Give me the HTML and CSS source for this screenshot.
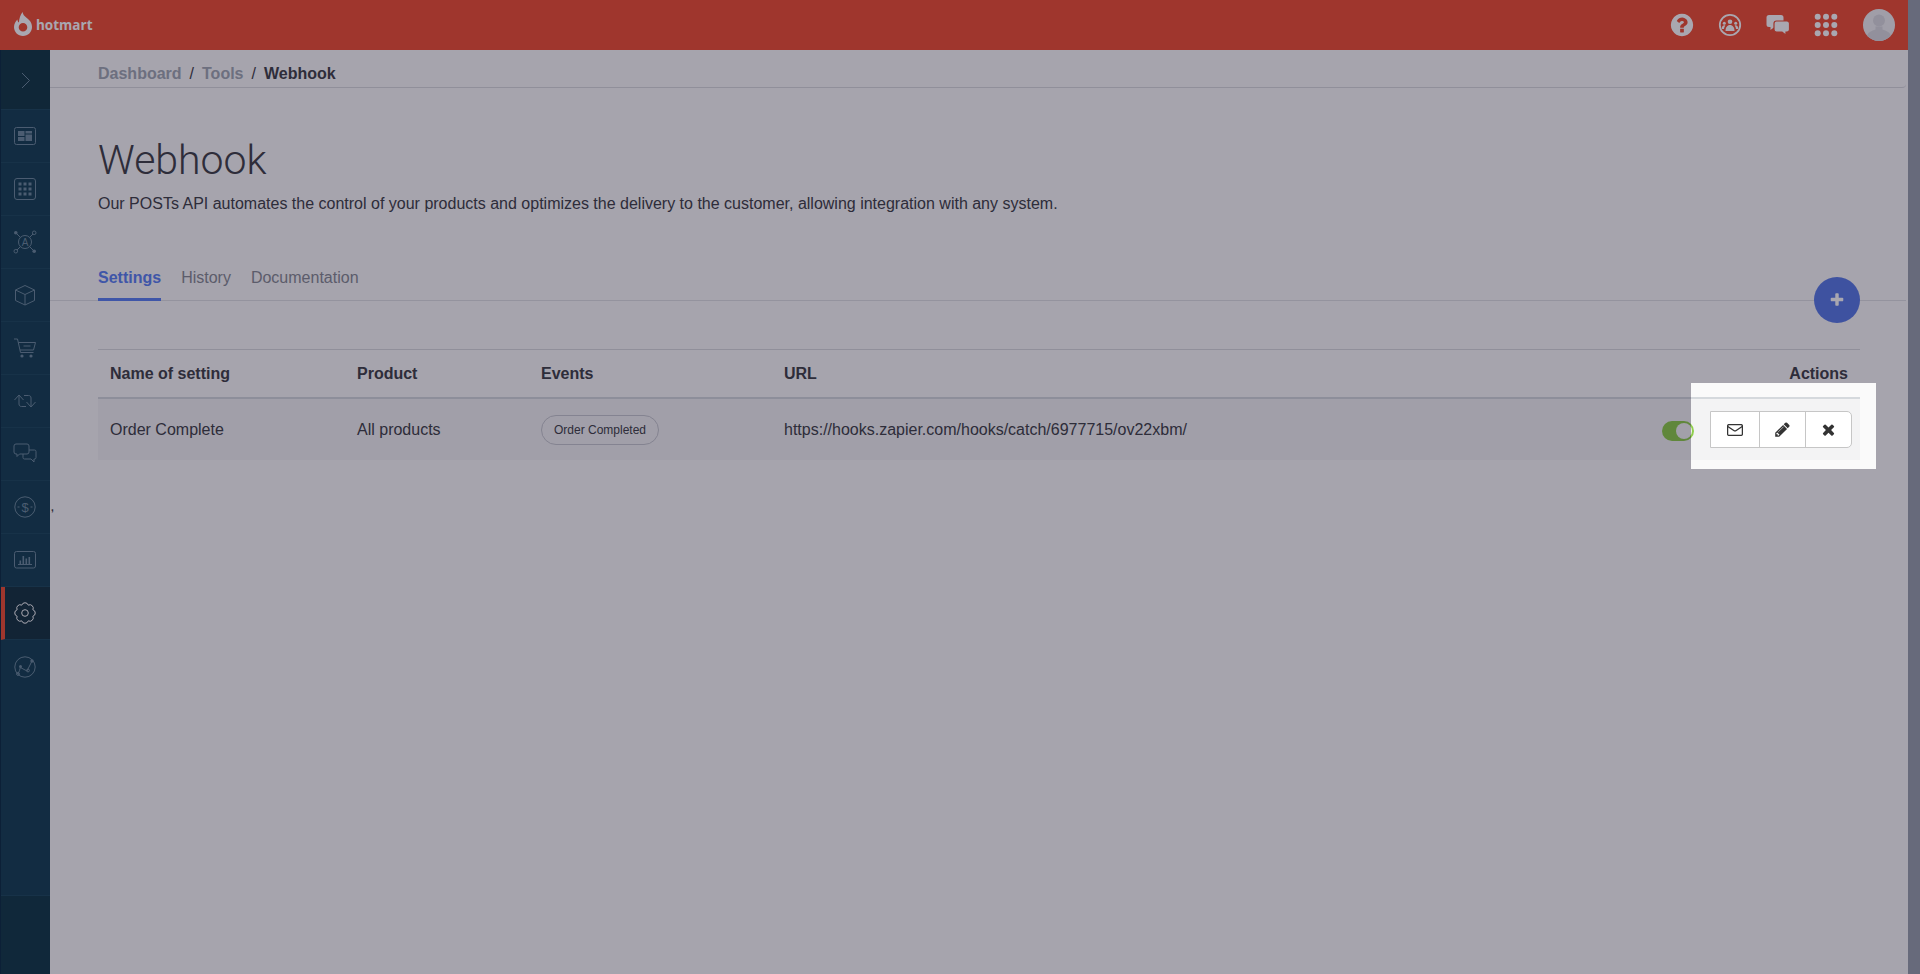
FILE: index.html
```html
<!DOCTYPE html>
<html>
  <head>
    <title>Webhook</title>
    <meta name="viewport" content="width=device-width, initial-scale=1">
    <link rel="stylesheet" href="styles.css">
  </head>
  <body>
    <header class="topbar">
      <div class="logo">
        <svg class="logo-mark" viewBox="0 0 18 24"><path fill-rule="evenodd" d="M8.6 0c.4 2.6 1.7 3.9 3.6 5.6C15.600 8.100 18 10.800 18 15c0 5-4 9-9 9s-9-4-9-9c0-3.400 1.700-6 3.400-7.600.1 1.500.6 2.400 1.500 3C5.300 6.500 6.300 3 8.600 0zM9 11a4.300 4.300 0 1 0 0 8.600A4.300 4.300 0 0 0 9 11z"/></svg>
        <span class="logo-text">hotmart</span>
      </div>
      <nav class="topbar-icons">
        <svg class="top-icon help" viewBox="0 0 1792 1792"><path d="M1024 1376v-192q0-14-9-23t-23-9h-192q-14 0-23 9t-9 23v192q0 14 9 23t23 9h192q14 0 23-9t9-23zm256-672q0-88-55.500-163t-138.500-116-170-41q-243 0-371 213-15 24 8 42l132 100q7 6 19 6 16 0 25-12 53-68 86-92 34-24 86-24 48 0 85.500 26t37.500 59q0 38-20 61t-68 45q-63 28-115.500 86.500t-52.500 125.500v36q0 14 9 23t23 9h192q14 0 23-9t9-23q0-19 21.500-49.500t54.500-49.500q32-18 49-28.500t46-35 44.500-48 28-60.500 12.500-81zm384 192q0 209-103 385.500t-279.500 279.500-385.500 103-385.500-103-279.500-279.500-103-385.500 103-385.500 279.500-279.500 385.500-103 385.500 103 279.500 279.500 103 385.500z"/></svg>
        <svg class="top-icon" viewBox="0 0 24 24">
          <circle class="ring" cx="12" cy="12" r="10.200"/>
          <circle cx="12" cy="8.800" r="2.300"/>
          <path d="M7.500 18c0-3.400 1.800-5.900 4.500-5.900s4.500 2.500 4.500 5.900z"/>
          <circle cx="6.300" cy="10.300" r="1.500"/>
          <circle cx="17.700" cy="10.300" r="1.500"/>
          <path d="M3.700 16c0-2 1-3.700 2.800-3.700.3 0 .6 0 .8.100-.8 1-1.200 2.200-1.300 3.600zM20.300 16c0-2-1-3.700-2.800-3.700-.3 0-.6 0-.8.100.8 1 1.200 2.200 1.300 3.600z"/>
        </svg>
        <svg class="top-icon" viewBox="0 0 24 24">
          <path d="M3 2h12a2.500 2.500 0 0 1 2.500 2.500v7A2.500 2.500 0 0 1 15 14H8.500L4.500 17v-3H3a2.500 2.500 0 0 1-2.500-2.500v-7A2.500 2.500 0 0 1 3 2z"/>
          <path class="bubble-back" d="M10.500 8H21a2.500 2.500 0 0 1 2.500 2.500v6A2.500 2.500 0 0 1 21 19h-1v3.300L16 19h-5.500A2.500 2.500 0 0 1 8 16.500v-6A2.500 2.500 0 0 1 10.500 8z"/>
        </svg>
        <svg class="top-icon" viewBox="0 0 24 24">
          <circle cx="3.700" cy="3.800" r="3"/><circle cx="12" cy="3.800" r="3"/><circle cx="20.300" cy="3.800" r="3"/>
          <circle cx="3.700" cy="12" r="3"/><circle cx="12" cy="12" r="3"/><circle cx="20.300" cy="12" r="3"/>
          <circle cx="3.700" cy="20.200" r="3"/><circle cx="12" cy="20.200" r="3"/><circle cx="20.300" cy="20.200" r="3"/>
        </svg>
        <div class="avatar">
          <svg viewBox="0 0 32 32"><circle cx="16" cy="11.500" r="6"/><path d="M4 28c0-5 5-6 8.500-7.500v-3h7v3C23 22 28 23 28 28v4H4z"/></svg>
        </div>
      </nav>
    </header>

    <aside class="sidebar">
      <div class="side-item toggle">
        <svg viewBox="0 0 24 24"><path d="M9 5l7.500 7.500L9 20"/></svg>
      </div>
      <div class="side-item">
        <svg viewBox="0 0 24 24"><rect x="1.500" y="3.500" width="21" height="17" rx="2"/><path class="solid" d="M5 7h6.500v5H5zM12.500 7H19v2.500h-6.500zM12.500 10.500H19V17h-6.500zM5 13h6.500v4H5z"/></svg>
      </div>
      <div class="side-item">
        <svg viewBox="0 0 24 24"><rect x="1.500" y="1.500" width="21" height="21" rx="2.500"/><path class="solid" d="M5.500 5.500h3v3h-3zM10.500 5.500h3v3h-3zM15.500 5.500h3v3h-3zM5.500 10.500h3v3h-3zM10.500 10.500h3v3h-3zM15.500 10.500h3v3h-3zM5.500 15.500h3v3h-3zM10.500 15.500h3v3h-3zM15.500 15.500h3v3h-3z"/></svg>
      </div>
      <div class="side-item">
        <svg viewBox="0 0 24 24">
          <circle cx="12" cy="12" r="6.500"/>
          <text class="icon-letter" x="12" y="15.500">A</text>
          <path d="M4 4l3.500 3.500M20 4l-3.500 3.500M4 20l3.500-3.500M20 20l-3.500-3.500"/>
          <circle class="solid" cx="2.800" cy="2.800" r="1.800"/><circle cx="21.200" cy="2.800" r="1.800"/>
          <circle cx="2.800" cy="21.200" r="1.800"/><circle class="solid" cx="21.200" cy="21.200" r="1.800"/>
        </svg>
      </div>
      <div class="side-item">
        <svg viewBox="0 0 24 24"><path d="M12 2.500l9.500 4.500v10.500L12 22l-9.500-4.500V7zM2.500 7l9.500 4.500L21.500 7M12 11.500V22"/></svg>
      </div>
      <div class="side-item">
        <svg viewBox="0 0 24 24"><path d="M1 3h3.500l3 13.500h13M5.300 6.500H22.500L20.500 14H7"/><path d="M10.500 10h7"/><circle class="solid" cx="9" cy="20" r="1.600"/><circle class="solid" cx="18" cy="20" r="1.600"/></svg>
      </div>
      <div class="side-item">
        <svg viewBox="0 0 24 24"><path d="M1.500 11L6 6l4.500 5M6 6.500V15c0 1.700 1 2.500 2.500 2.500H13M22.500 13L18 18l-4.500-5M18 17.500V9c0-1.700-1-2.500-2.500-2.500H11"/></svg>
      </div>
      <div class="side-item">
        <svg viewBox="0 0 24 24"><path d="M3 2h11a2 2 0 0 1 2 2v6a2 2 0 0 1-2 2H6.500L4 14.500V12H3a2 2 0 0 1-2-2V4a2 2 0 0 1 2-2z"/><path d="M16 8h5.500a1.500 1.500 0 0 1 1.500 1.500v6a1.500 1.500 0 0 1-1.500 1.500H21v3l-3-3h-6.500a1.500 1.500 0 0 1-1.500-1.500V12"/></svg>
      </div>
      <div class="side-item">
        <svg viewBox="0 0 24 24"><circle cx="12" cy="12" r="10.200"/><text class="icon-dollar" x="12" y="16.800">$</text><path d="M4.500 12h2M17.500 12h2"/></svg>
      </div>
      <div class="side-item">
        <svg viewBox="0 0 24 24"><rect x="1.500" y="3.500" width="21" height="16.500" rx="2"/><path d="M5 16.500h14"/><path class="solid" d="M6.500 12.500h1.600V16H6.500zM9.500 8h1.600v8H9.500zM12.500 10.500h1.600V16h-1.600zM15.500 9h1.600v7h-1.600z"/></svg>
      </div>
      <div class="side-item active">
        <svg viewBox="0 0 24 24"><path d="M15.250 4.150A3.400 3.400 0 0 1 19.850 8.750 3.400 3.400 0 0 1 19.850 15.250 3.400 3.400 0 0 1 15.250 19.850 3.400 3.400 0 0 1 8.750 19.850 3.400 3.400 0 0 1 4.150 15.250 3.400 3.400 0 0 1 4.150 8.750 3.400 3.400 0 0 1 8.750 4.150 3.400 3.400 0 0 1 15.250 4.150z"/><circle cx="12" cy="12" r="3.300"/></svg>
      </div>
      <div class="side-item last">
        <svg viewBox="0 0 24 24"><circle cx="12" cy="12" r="10.200"/><path d="M5 19l1.500-3.500 .9-3 6.600 3.500L18.500 7"/><circle class="solid" cx="7.500" cy="11.500" r="1.500"/><circle cx="5" cy="19" r="1.400"/><circle cx="15" cy="15.500" r="1.400"/><circle class="solid" cx="19" cy="6" r="1.700"/></svg>
      </div>
      <div class="side-bottom"></div>
    </aside>

    <main class="main">
      <div class="breadcrumb">
        <a>Dashboard</a><span class="sep">/</span><a>Tools</a><span class="sep">/</span><b>Webhook</b>
      </div>
      <span class="stray">,</span>

      <section class="intro">
        <h1>Webhook</h1>
        <p>Our POSTs API automates the control of your products and optimizes the delivery to the customer, allowing integration with any system.</p>
      </section>

      <div class="tabs">
        <a class="tab current">Settings</a>
        <a class="tab">History</a>
        <a class="tab">Documentation</a>
        <button class="add-btn">
          <svg viewBox="0 0 1792 1792"><path d="M1600 736v192q0 40-28 68t-68 28h-416v416q0 40-28 68t-68 28h-192q-40 0-68-28t-28-68v-416h-416q-40 0-68-28t-28-68v-192q0-40 28-68t68-28h416v-416q0-40 28-68t68-28h192q40 0 68 28t28 68v416h416q40 0 68 28t28 68z"/></svg>
        </button>
      </div>

      <table class="hooks">
        <thead>
          <tr>
            <th class="col-name">Name of setting</th>
            <th class="col-product">Product</th>
            <th class="col-events">Events</th>
            <th>URL</th>
            <th class="col-actions">Actions</th>
          </tr>
        </thead>
        <tbody>
          <tr>
            <td>Order Complete</td>
            <td>All products</td>
            <td><span class="tag">Order Completed</span></td>
            <td>https://hooks.zapier.com/hooks/catch/6977715/ov22xbm/</td>
            <td>
              <div class="row-actions">
                <span class="switch"></span>
                <div class="btn-group">
                  <button class="mail">
                    <svg viewBox="0 0 16 12"><rect x=".6" y=".6" width="14.800" height="10.800" rx="1.500"/><path d="M.8 2.500l6 4q1.200 .8 2.400 0l6-4"/></svg>
                  </button>
                  <button class="edit">
                    <svg viewBox="0 0 1792 1792"><path d="M491 1536l91-91-235-235-91 91v107h128v128h107zm523-928q0-22-22-22-10 0-17 7l-542 542q-7 7-7 17 0 22 22 22 10 0 17-7l542-542q7-7 7-17zm-54-192l416 416-832 832h-416v-416zm683 96q0 53-37 90l-166 166-416-416 166-165q36-38 90-38 53 0 91 38l235 234q37 39 37 91z"/></svg>
                  </button>
                  <button class="remove">
                    <svg viewBox="0 0 1792 1792"><path d="M1490 1322q0 40-28 68l-136 136q-28 28-68 28t-68-28l-294-294-294 294q-28 28-68 28t-68-28l-136-136q-28-28-28-68t28-68l294-294-294-294q-28-28-28-68t28-68l136-136q28-28 68-28t68 28l294 294 294-294q28-28 68-28t68 28l136 136q28 28 28 68t-28 68l-294 294 294 294q28 28 28 68z"/></svg>
                  </button>
                </div>
              </div>
            </td>
          </tr>
        </tbody>
      </table>
    </main>

    <div class="scrollbar"></div>

    <!-- Tour highlight: dims the whole page except this box -->
    <div class="tour-hole"></div>
  </body>
</html>
```

FILE: styles.css
```css
html, body {
  height: 100%;
}
body {
  margin: 0;
  overflow: hidden;
  background: #fafafa;
  color: #42444a;
  font-family: "Liberation Sans", Arial, sans-serif;
  font-size: 16px;
  display: grid;
  grid-template-columns: 50px 1fr 12px;
  grid-template-rows: 50px 1fr;
}

/* Top bar */
.topbar {
  grid-column: 1 / 3;
  background: #f05236;
  display: flex;
  align-items: center;
  justify-content: space-between;
  padding: 0 13px 0 14px;
}
.logo {
  display: flex;
  align-items: center;
  gap: 4px;
  color: #fff;
}
.logo-mark {
  width: 18px;
  height: 24px;
  fill: #fff;
  margin-top: -2px;
}
.logo-text {
  font-family: "Open Sans", sans-serif;
  font-weight: 700;
  font-size: 13.500px;
}
.topbar-icons {
  display: flex;
  align-items: center;
  gap: 24px;
}
.top-icon {
  width: 24px;
  height: 24px;
  fill: #fff;
}
.top-icon .ring {
  fill: none;
  stroke: #fff;
  stroke-width: 1.8;
}
.top-icon .bubble-back {
  stroke: #f05236;
  stroke-width: 1.2;
}
.top-icon.help {
  width: 26px;
  height: 26px;
  margin: 0 -1px;
}
.avatar {
  width: 32px;
  height: 32px;
  border-radius: 50%;
  background: #f2f2f3;
  overflow: hidden;
  margin-left: 1px;
}
.avatar svg {
  display: block;
  fill: #dcdce0;
}

/* Sidebar */
.sidebar {
  background: #174356;
  border-left: 1px solid #0f3146;
  display: flex;
  flex-direction: column;
  box-sizing: border-box;
}
.side-item {
  height: 53px;
  flex: none;
  display: flex;
  align-items: center;
  justify-content: center;
  box-sizing: border-box;
  padding-right: 2px;
  border-bottom: 1px solid #1f4c60;
  color: #6f8d9e;
}
.side-item.toggle {
  height: 60px;
  background: #153b47;
}
.side-item.active {
  background: #173743;
  border-left: 4px solid #f05236;
  color: #fff;
  padding-right: 6px;
}
.side-item.last {
  border-bottom: 0;
}
.side-item svg {
  width: 24px;
  height: 24px;
  fill: none;
  stroke: currentColor;
  stroke-width: 1;
}
.side-item svg .solid {
  fill: currentColor;
  stroke: none;
}
.icon-letter {
  fill: currentColor;
  stroke: none;
  font-size: 10px;
  text-anchor: middle;
}
.icon-dollar {
  fill: currentColor;
  stroke: none;
  font-size: 13px;
  text-anchor: middle;
}
.side-bottom {
  margin-top: auto;
  height: 78px;
  background: #153c4b;
  border-top: 1px solid #1f4c60;
}

/* Main column */
.main {
  position: relative;
  min-width: 0;
}
.breadcrumb {
  height: 38px;
  box-sizing: border-box;
  margin-right: 2px;
  padding: 14px 0 0 48px;
  border-bottom: 1px solid #d9dade;
  border-bottom-right-radius: 4px;
  font-size: 16px;
  font-weight: 700;
  line-height: 20px;
  color: #42444a;
}
.breadcrumb a {
  color: #a3aab4;
}
.breadcrumb .sep {
  margin: 0 8px;
  font-weight: 400;
}
.stray {
  position: absolute;
  left: 1px;
  top: 452px;
  font-size: 10px;
  font-weight: 700;
}
.intro {
  padding: 48px 48px 0;
}
.intro h1 {
  margin: 0;
  font-family: Roboto, sans-serif;
  font-weight: 300;
  font-size: 41px;
  line-height: 48px;
  color: #42444a;
}
.intro p {
  margin: 9px 0 0;
  line-height: 22px;
}

/* Tabs */
.tabs {
  position: relative;
  margin: 46px 2px 0 0;
  padding-left: 48px;
  display: flex;
  gap: 20px;
  border-bottom: 1px solid #dfe0e4;
}
.tab {
  padding: 7px 0 10px;
  line-height: 20px;
  color: #898d95;
  margin-bottom: -1px;
  border-bottom: 3px solid transparent;
}
.tab.current {
  color: #5d83f3;
  font-weight: 700;
  border-bottom-color: #5d83f3;
}
.add-btn {
  position: absolute;
  right: 46px;
  top: 16px;
  width: 46px;
  height: 46px;
  padding: 0;
  border: 0;
  border-radius: 50%;
  background: #5b7de7;
  display: flex;
  align-items: center;
  justify-content: center;
}
.add-btn svg {
  width: 16px;
  height: 16px;
  fill: #fff;
}

/* Table */
.hooks {
  margin: 48px 0 0 48px;
  width: 1762px;
  border-collapse: collapse;
  table-layout: fixed;
}
.hooks thead tr {
  border-top: 1px solid #d9dade;
  border-bottom: 2px solid #d5d9dd;
}
.hooks th {
  height: 47px;
  padding: 0 12px;
  text-align: left;
  font-weight: 700;
}
.hooks td {
  height: 61px;
  padding: 0 12px;
  background: #f3f3f4;
}
.col-name {
  width: 223px;
}
.col-product {
  width: 160px;
}
.col-events {
  width: 219px;
}
.hooks th.col-actions {
  width: 686px;
  text-align: right;
}
.tag {
  display: inline-block;
  height: 30px;
  box-sizing: border-box;
  padding: 0 12px;
  border: 1px solid #c6c8cf;
  border-radius: 15px;
  font-size: 12px;
  line-height: 28px;
}
.row-actions {
  display: flex;
  align-items: center;
  justify-content: flex-end;
  gap: 16px;
  margin-right: -4px;
}
.switch {
  position: relative;
  width: 32px;
  height: 20px;
  margin-top: 2px;
  border-radius: 10px;
  background: #8fce4c;
}
.switch::after {
  content: "";
  position: absolute;
  right: 2px;
  top: 2px;
  width: 16px;
  height: 16px;
  border-radius: 50%;
  background: #f4f4f4;
}
.btn-group {
  display: flex;
  height: 37px;
  border: 1px solid #c6c6c6;
  border-radius: 0 5px 5px 0;
  background: #fff;
  box-sizing: border-box;
}
.btn-group button {
  height: 100%;
  padding: 0;
  border: 0;
  border-right: 1px solid #c6c6c6;
  background: none;
  display: flex;
  align-items: center;
  justify-content: center;
}
.btn-group button:last-child {
  border-right: 0;
  border-radius: 0 5px 5px 0;
}
.btn-group svg {
  fill: #333;
}
.btn-group .mail {
  width: 49px;
}
.btn-group .mail svg {
  width: 16px;
  height: 12px;
  fill: none;
  stroke: #333;
  stroke-width: 1.300;
}
.btn-group .edit {
  width: 46px;
}
.btn-group .edit svg {
  width: 17px;
  height: 17px;
}
.btn-group .remove {
  width: 45px;
}
.btn-group .remove svg {
  width: 17px;
  height: 17px;
}

.scrollbar {
  grid-column: 3;
  grid-row: 1 / 3;
  background: #9aa2ae;
}

/* Tour overlay, hole sits on the row actions */
.tour-hole {
  position: fixed;
  left: 1691px;
  top: 383px;
  width: 185px;
  height: 86px;
  box-shadow: 0 0 0 3000px rgba(8, 2, 30, 0.35);
}
```
